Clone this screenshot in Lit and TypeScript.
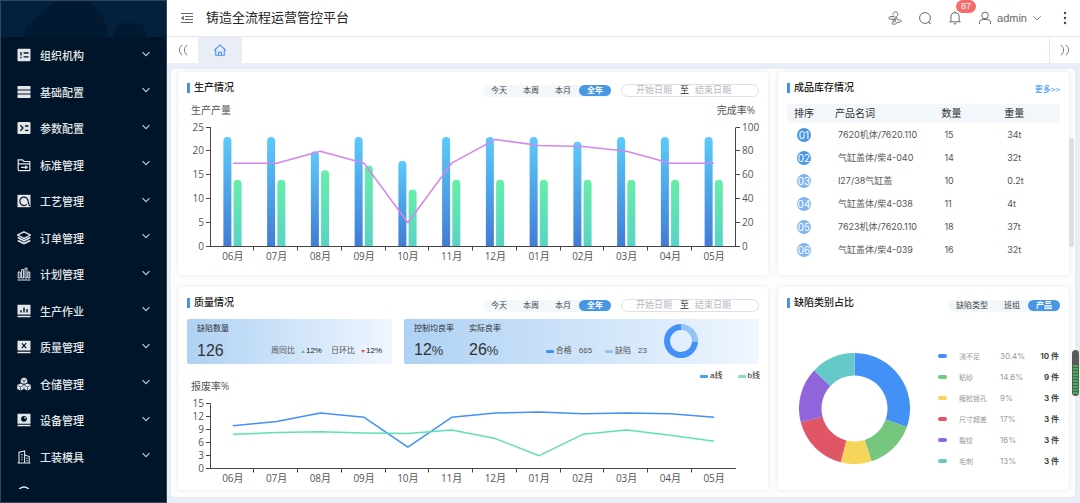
import { LitElement, html, svg, css, nothing } from "lit";
import { customElement, state, property } from "lit/decorators.js";
import { classMap } from "lit/directives/class-map.js";

const MONTHS = ["06", "07", "08", "09", "10", "11", "12", "01", "02", "03", "04", "05"];
const OUTPUT = [23, 23, 20, 23, 18, 23, 23, 23, 22, 23, 23, 23];
const FINISHED = [14, 14, 16, 17, 12, 14, 14, 14, 14, 14, 14, 14];
const RATE = [70, 70, 80, 70, 20, 70, 90, 85, 84, 80, 70, 70];
const LINE_A = [10, 11, 13, 12, 5, 12, 13, 13.2, 12.8, 13, 12.8, 12];
const LINE_B = [8, 8.4, 8.6, 8.3, 8.2, 9, 7, 3, 8, 9, 7.8, 6.4];

const STOCK = [
  ["7620机体/7620.110", "15", "34t"],
  ["气缸盖体/柴4-040", "14", "32t"],
  ["I27/38气缸盖", "10", "0.2t"],
  ["气缸盖体/柴4-038", "11", "4t"],
  ["7623机体/7620.110", "18", "37t"],
  ["气缸盖体/柴4-039", "16", "32t"],
];

const DEFECTS = [
  { name: "浇不足", pct: "30.4%", share: 30.4, count: 10, color: "#4390f7" },
  { name: "粘砂", pct: "14.6%", share: 14.6, count: 9, color: "#74c77d" },
  { name: "缩松锁孔", pct: "9%", share: 9, count: 3, color: "#f7d45a" },
  { name: "尺寸超差", pct: "17%", share: 17, count: 3, color: "#e05667" },
  { name: "裂纹", pct: "16%", share: 16, count: 3, color: "#9166dc" },
  { name: "毛刺", pct: "13%", share: 13, count: 3, color: "#66c9c9" },
];

/* Menu glyphs on a 14 x 14 grid. "k" is the sidebar background, used to cut shapes out. */
const k = "#001529";
const MENU = [
  { label: "组织机构", icon: svg`<rect x=".5" y=".8" width="13" height="12.4" rx="1" fill="currentColor"/><path d="M4 4v3.600M4 8.800v1.400M6.600 5h5M6.600 8.800h5" stroke=${k} stroke-width="1.300"/>` },
  { label: "基础配置", icon: svg`<path d="M.5 1h13v3.400H.5zM.5 5.400h13v3.200H.5zM.5 9.600h13V13H.5z" fill="currentColor"/>` },
  { label: "参数配置", icon: svg`<rect x=".5" y="1" width="13" height="12" rx="1" fill="currentColor"/><path d="M3.400 4.200 6 7l-2.600 2.800M8 5h3.400M8 9.400h3.400" fill="none" stroke=${k} stroke-width="1.300"/>` },
  { label: "标准管理", icon: svg`<path d="M1.200 12V1.800h4.200l1.400 1.700h6v9.200H1.900zM1.200 5.800h11.600M4 9.300h6M8.200 7.800l2 1.500-2 1.500" fill="none" stroke="currentColor" stroke-width="1.200"/>` },
  { label: "工艺管理", icon: svg`<rect x=".5" y=".8" width="13" height="12.4" fill="currentColor"/><path d="M9.800 10.400A4.200 4.200 0 1 1 11.200 7.200c0 1.900.2 3.200 1.800 5" fill="none" stroke=${k} stroke-width="1.200"/>` },
  { label: "订单管理", icon: svg`<path d="M7 .8 13.400 4 7 7.400.6 4z" fill="none" stroke="currentColor" stroke-width="1.300"/><path d="M.8 6.600 7 9.800l6.200-3.200M.8 9.400 7 12.600l6.200-3.200" fill="none" stroke="currentColor" stroke-width="1.700"/>` },
  { label: "计划管理", icon: svg`<path d="M1.200 5h2v6h-2zM4.600 2.600h2V11h-2zM8 1.200h2V11H8zM11 5h1.800v6H11zM.4 13h13.200" fill="none" stroke="currentColor" stroke-width="1"/>` },
  { label: "生产作业", icon: svg`<path d="M.5.8h13v9.800H.5zM.5 11.800h13v1.400H.5z" fill="currentColor"/><path d="M4 8.600V6.200M7 8.600V3.400M10 8.600V5" stroke=${k} stroke-width="1.400"/>` },
  { label: "质量管理", icon: svg`<path d="M.5.8h13v9.800H.5zM.5 11.800h13v1.400H.5z" fill="currentColor"/><path d="m5 3.400 4 4.600M9.200 3.200 4.800 8.200" stroke=${k} stroke-width="1.200"/>` },
  { label: "仓储管理", icon: svg`<path d="m7 .4 3.200 1.600v3.500L7 7.200 3.800 5.500V2zM3.500 6.400l3.300 1.700v3.800l-3.300 1.700L.2 11.900V8.100zM10.500 6.400l3.300 1.700v3.800l-3.300 1.700-3.300-1.700V8.100z" fill="currentColor"/><path d="M7 3.800v3M3.500 10v3.200M10.500 10v3.200M4.400 2.600 7 3.900l2.600-1.300M.8 8.600l2.700 1.300 2.700-1.300M7.800 8.600l2.700 1.300 2.700-1.300" fill="none" stroke=${k} stroke-width=".6"/>` },
  { label: "设备管理", icon: svg`<path d="M.5.8h13v10H.5zM.5 11.800h13v1.400H.5z" fill="currentColor"/><circle cx="7" cy="5.800" r="2.900" fill=${k}/><circle cx="8" cy="4.800" r=".9" fill="currentColor"/>` },
  { label: "工装模具", icon: svg`<path d="M2 12.800V2.200L7.600.9v11.900M7.600 5l4.600 1.600v6.200M.5 13h13M4.200 4.600h1.400M4.200 7.200h1.400M4.200 9.800h1.400M9.400 8.400h1.200M9.400 10.600h1.200" fill="none" stroke="currentColor" stroke-width="1.100"/>` },
  { label: "", icon: svg`<circle cx="7" cy="7" r="6" fill="none" stroke="currentColor" stroke-width="1.400"/>` },
];

/* Shared horizontal scale of the two month charts. */
const X0 = 33;
const STEP = 43.75;
const X1 = X0 + STEP * 12;
const mid = (i: number) => X0 + STEP * (i + 0.5);
const points = (values: number[], base: number, unit: number) =>
  values.map((v, i) => `${mid(i)},${(base - v * unit).toFixed(1)}`).join(" ");

function ringSlice(cx: number, cy: number, R: number, r: number, from: number, to: number) {
  const at = (radius: number, t: number) => {
    const a = t * Math.PI * 2;
    return `${(cx + radius * Math.sin(a)).toFixed(2)} ${(cy - radius * Math.cos(a)).toFixed(2)}`;
  };
  const big = to - from > 0.5 ? 1 : 0;
  return `M${at(R, from)}A${R} ${R} 0 ${big} 1 ${at(R, to)}L${at(r, to)}A${r} ${r} 0 ${big} 0 ${at(r, from)}Z`;
}

const monthAxis = (base: number, labelY: number) => svg`
  <path class="axis" d="M${X0 - 5} ${base}H${X1}"/>
  ${MONTHS.map((m, i) => svg`
    ${i ? svg`<path class="axis" d="M${Math.floor(X0 + STEP * i) - 0.5} ${base}v4"/>` : nothing}
    <text class="tick" x=${mid(i)} y=${labelY} text-anchor="middle">${m}月</text>`)}
`;

const fontStack = css`
  :host { font-family: "Liberation Sans", "Noto Sans CJK SC", sans-serif; color: #333; }
  button, input { font: inherit; color: inherit; border: 0; padding: 0; margin: 0; background: none; }
  button { cursor: pointer; }
`;

@customElement("pill-group")
class PillGroup extends LitElement {
  @property({ attribute: false }) options: string[] = [];
  @property() selected = "";

  static styles = [fontStack, css`
    :host { display: flex; height: 12px; border-radius: 6px; background: #f2f7fc; }
    .pill { padding: 0 8px; font-size: 8px; line-height: 11px; height: 11px; border-radius: 6px; color: #444; white-space: nowrap; }
    .on { background: #4797e4; color: #fff; font-weight: 700; }
  `];

  render() {
    return this.options.map((o) => html`
      <button class=${classMap({ pill: true, on: o === this.selected })}
        aria-pressed=${o === this.selected} @click=${() => (this.selected = o)}>${o}</button>`);
  }
}

@customElement("side-menu")
class SideMenu extends LitElement {
  static styles = [fontStack, css`
    :host { display: flex; flex-direction: column; box-sizing: border-box; background: #001529; border: 1px solid #33465a; padding-bottom: 13px; min-height: 0; }
    .banner { height: 36px; flex: none; background: #03203d; display: block; width: 100%; }
    .menu { list-style: none; margin: 0; padding: 0; flex: 1; min-height: 0; overflow: hidden; display: grid; grid-template-rows: repeat(7, 36px 37px); }
    .item { width: 100%; height: 100%; display: flex; align-items: center; gap: 9px; padding: 0 15px 0 16px; color: #e4e7ea; font-size: 11px; }
    .glyph { width: 14px; height: 14px; flex: none; }
    .name { flex: 1; text-align: left; font-weight: 500; }
    .arrow { width: 10px; height: 10px; margin-bottom: 3px; flex: none; }
  `];

  render() {
    return html`
      <svg class="banner" viewBox="0 0 165 36" preserveAspectRatio="none" aria-hidden="true">
        <path d="M23 36C24 26 30 20 38 14 46 8 50 3 56 0h32c6 4 10 12 16 20 2 6 2 12 3 16z" fill="#021a31"/>
        <path d="M112 36c1-8 4-13 9-14h16c6 2 8 8 9 14z" fill="#021a31"/>
      </svg>
      <ul class="menu">
        ${MENU.map((m) => html`<li>
          <button class="item">
            <svg class="glyph" viewBox="0 0 14 14" aria-hidden="true">${m.icon}</svg>
            <span class="name">${m.label}</span>
            <svg class="arrow" viewBox="0 0 10 10" aria-hidden="true"><path d="m1.500 3.200 3.500 3.500 3.500-3.500" fill="none" stroke="#c3c9cf" stroke-width="1.200"/></svg>
          </button></li>`)}
      </ul>`;
  }
}

@customElement("app-root")
class AppRoot extends LitElement {
  @state() private start = "";
  @state() private end = "";

  static styles = [fontStack, css`
    :host { display: grid; grid-template-columns: 167px minmax(0, 1fr); height: 100vh; background: #fff; overflow: hidden; }
    svg { display: block; }
    .main { display: flex; flex-direction: column; min-width: 0; min-height: 0; }

    .header { height: 36px; flex: none; display: flex; align-items: center; border-bottom: 1px solid #e6e8ee; padding: 0 8px 0 13px; color: #666; }
    .fold { width: 14px; height: 14px; margin-right: 12px; }
    .title { margin: 0; flex: 1; font-size: 13px; font-weight: 400; color: #222; line-height: 20px; }
    .icons { display: flex; align-items: center; gap: 16px; }
    .ico { width: 14px; height: 14px; display: block; }
    .bell { position: relative; }
    .badge { position: absolute; left: 8px; top: -11px; width: 20px; height: 13px; border-radius: 7px; background: #f56c6c; color: #fff; font-size: 9px; line-height: 13px; text-align: center; }
    .user { display: flex; align-items: center; gap: 5px; font-size: 11px; color: #666; }
    .caret { width: 10px; height: 10px; }

    .tabs { height: 26px; flex: none; display: flex; }
    .edge { width: 31px; display: grid; place-items: center; color: #777; }
    .edge-right { border-left: 1px solid #e6e8ee; }
    .home { width: 44px; display: grid; place-items: center; background: #e9edf6; color: #4a90f5; }
    .spacer { flex: 1; }

    .content { flex: 1; min-height: 0; background: #e9edf5; padding: 6px 5px 6px 4px; display: flex; }
    .board { flex: 1; min-width: 0; background: #fdfdfe; border-radius: 4px; padding: 3px 6px 7px 7px; display: grid; grid-template-columns: minmax(0, 590fr) minmax(0, 291fr); grid-template-rows: minmax(0, 1fr) minmax(0, 1fr); gap: 12px 10px; }
    .card { background: #fff; border-radius: 4px; box-shadow: 0 0 5px rgba(30, 50, 90, .1); display: flex; flex-direction: column; min-width: 0; min-height: 0; }
    .head { height: 32px; flex: none; display: flex; align-items: center; padding: 0 9px; }
    .name { margin: 0; flex: 1; font-size: 10px; line-height: 12px; font-weight: 500; color: #222; display: flex; align-items: center; gap: 4px; }
    .name::before { content: ""; width: 3px; height: 10px; background: #4391f7; }
    .tools { display: flex; align-items: center; gap: 10px; margin-top: 5px; }
    .range { box-sizing: border-box; width: 138px; height: 13px; border: 1px solid #dcdfe6; border-radius: 7px; display: flex; align-items: center; gap: 6px; padding-left: 14px; font-size: 9px; line-height: 11px; }
    .date { width: 38px; height: 11px; outline: 0; }
    .date::placeholder { color: #b4b8c0; opacity: 1; }
    .chart { width: 100%; height: auto; overflow: visible; }
    .axis { stroke: #444; stroke-width: 1; fill: none; }
    .tick { font: 10px "Open Sans", "Noto Sans CJK SC", sans-serif; fill: #555; }
    .line { fill: none; stroke-width: 1.500; stroke-linejoin: round; }

    .stats { display: grid; grid-template-columns: 205fr 355fr; gap: 12px; padding: 0 9px; }
    .stat { height: 45px; box-sizing: border-box; border-radius: 2px; display: flex; padding: 5px 10px 4px; background: linear-gradient(90deg, #aed1f3, #eff6ff); }
    .metric { margin-right: 15px; display: flex; flex-direction: column; justify-content: space-between; font-size: 8px; line-height: 10px; white-space: nowrap; }
    .big { font-size: 16px; line-height: 18px; color: #333; }
    .unit { font-size: 13px; }
    .notes { flex: 1; display: flex; justify-content: flex-end; align-items: flex-end; gap: 9px; font-size: 8px; line-height: 10px; padding-bottom: 4px; color: #555; white-space: nowrap; }
    .note { display: flex; align-items: center; gap: 6px; }
    .delta { display: flex; align-items: center; gap: 1px; color: #222; }
    .up, .down { border: 2px solid transparent; }
    .up { border-bottom: 3px solid #6ccb6c; border-top: 0; }
    .down { border-top: 3px solid #ee4b4b; border-bottom: 0; }
    .parts { gap: 13px; }
    .part { display: flex; align-items: center; gap: 2px; }
    .part b { font-weight: 400; margin-left: 5px; }
    .dash { width: 8px; height: 3px; border-radius: 1px; }
    .solid { background: #4390f7; }
    .pale { background: #93c4f5; }
    .sky { background: #4aa3e8; }
    .mint { background: #7fe3b8; }
    .ring { width: 34px; height: 34px; margin: 0 51px 0 17px; }
    .keys { display: flex; justify-content: flex-end; gap: 15px; padding: 8px 8px 0; font-size: 8px; line-height: 8px; color: #222; }

    .link { font-size: 8px; color: #2f8ff5; text-decoration: none; }
    .stock { border-collapse: collapse; table-layout: fixed; margin: 0 9px; font-size: 9px; color: #555; }
    .stock th { height: 19px; padding: 0 0 0 7px; font-size: 10px; font-weight: 400; text-align: left; background: #f2f7fc; color: #333; line-height: 12px; }
    .stock td { height: 23px; padding: 0 0 0 10px; line-height: 14px; white-space: nowrap; font-family: Inter, "Noto Sans CJK SC", sans-serif; }
    .c1 { width: 15%; } .c2 { width: 39%; } .c3 { width: 23%; }
    .rank { display: block; width: 14px; height: 14px; border-radius: 50%; background: #7fb7ee; color: #fff; text-align: center; line-height: 14px; font-size: 10px; }
    .top { background: #4797e4; }

    .share { flex: 1; display: flex; align-items: center; gap: 28px; padding: 7px 10px 0 21px; }
    .donut { flex: 0 1 111px; min-width: 0; }
    .legend { flex: 1; list-style: none; margin: 0; padding: 0; font-size: 8px; font-family: Inter, "Noto Sans CJK SC", sans-serif; }
    .row { height: 21px; display: grid; grid-template-columns: 9px 29px minmax(0, 1fr) auto; column-gap: 12px; align-items: center; color: #999; white-space: nowrap; }
    .chip { height: 4px; border-radius: 2px; }
    .label { font-size: 7px; }
    .count { font-weight: 700; color: #444; }

    .thumb { position: absolute; right: 6px; top: 138px; width: 5px; height: 109px; border-radius: 3px; background: #dcdee2; }
    .meter { position: absolute; right: 1px; top: 350px; width: 7px; height: 46px; border-radius: 4px; overflow: hidden; background: #5a5a5a; box-sizing: border-box; padding: 15px 1px 2px; }
    .level { height: 100%; background: repeating-linear-gradient(180deg, #3fae55 0 2px, #4a6650 2px 3px); }
  `];

  private range(id: string) {
    return html`
      <div class="tools">
        <pill-group .options=${["今天", "本周", "本月", "全年"]} selected="全年"></pill-group>
        <div class="range">
          <input class="date" id="${id}-from" aria-label="开始日期" placeholder="开始日期" .value=${this.start}>
          <span>至</span>
          <input class="date" id="${id}-to" aria-label="结束日期" placeholder="结束日期" .value=${this.end}>
        </div>
      </div>`;
  }

  private outputChart() {
    const base = 142.5;
    const unit = 4.76;
    const bar = (x: number, v: number, fill: string) => {
      const y = base - v * unit;
      return svg`<path d="M${x} ${base}V${y + 4}a4 4 0 0 1 8 0V${base}z" fill=${fill}/>`;
    };
    return html`
      <svg class="chart" viewBox="0 0 590 168" role="img" aria-label="生产产量">
        <defs>
          <linearGradient id="blue" x1="0" y1="0" x2="0" y2="1"><stop offset="0" stop-color="#5bcbfa"/><stop offset="1" stop-color="#417bd6"/></linearGradient>
          <linearGradient id="green" x1="0" y1="0" x2="0" y2="1"><stop offset="0" stop-color="#68eda9"/><stop offset="1" stop-color="#58d3c6"/></linearGradient>
        </defs>
        <text class="tick" x="13" y="10">生产产量</text>
        <text class="tick" x="577" y="10" text-anchor="end">完成率%</text>
        ${OUTPUT.map((v, i) => svg`${bar(mid(i) - 9.5, v, "url(#blue)")}${bar(mid(i) + 0.7, FINISHED[i], "url(#green)")}`)}
        <path class="axis" d="M${X0 - 0.5} ${base}V23.500M${X1 - 0.5} ${base}V23.500"/>
        ${[0, 5, 10, 15, 20, 25].map((v) => {
          const y = Math.round(base - v * unit) - 0.5;
          return svg`
            <path class="axis" d="M${X0 - 5} ${v ? y : base}h5M${X1} ${v ? y : base}h4"/>
            <text class="tick" x=${X0 - 7} y=${y + 3} text-anchor="end">${v}</text>
            <text class="tick" x=${X1 + 6} y=${y + 3}>${v * 4}</text>`;
        })}
        ${monthAxis(base, 156)}
        <polyline class="line" stroke="#d486ec" points=${points(RATE, base, unit / 4)}/>
      </svg>`;
  }

  private scrapChart() {
    const base = 88.5;
    const unit = 4.27;
    return html`
      <svg class="chart" viewBox="0 0 590 108" role="img" aria-label="报废率">
        <text class="tick" x="13" y="10">报废率%</text>
        <path class="axis" d="M${X0 - 0.5} ${base}V24.500"/>
        ${[0, 3, 6, 9, 12, 15].map((v) => {
          const y = Math.round(base - v * unit) - 0.5;
          return svg`
            <path class="axis" d="M${X0 - 5} ${v ? y : base}h5"/>
            <text class="tick" x=${X0 - 7} y=${y + 3} text-anchor="end">${v}</text>`;
        })}
        ${monthAxis(base, 102)}
        <polyline class="line" stroke="#4390f7" points=${points(LINE_A, base, unit)}/>
        <polyline class="line" stroke="#5fe0b4" points=${points(LINE_B, base, unit)}/>
      </svg>`;
  }

  private donut() {
    let from = 0;
    return html`
      <svg class="donut" viewBox="0 0 111 111" role="img" aria-label="缺陷类别占比">
        ${DEFECTS.map((d) => {
          const to = from + d.share / 100;
          const slice = svg`<path d=${ringSlice(55.5, 55.5, 55.5, 33, from, to)} fill=${d.color}/>`;
          from = to;
          return slice;
        })}
      </svg>`;
  }

  render() {
    return html`
      <side-menu></side-menu>
      <div class="main">
        <header class="header">
          <button class="fold" aria-label="收起菜单"><svg class="ico" viewBox="0 0 14 14"><path d="M1 2.500h12M5 5.500h8M5 8.500h8M1 11.500h12" stroke="currentColor" stroke-width="1.200"/><path d="M3.800 4.600v4.800L.9 7z" fill="currentColor"/></svg></button>
          <h1 class="title">铸造全流程运营管控平台</h1>
          <div class="icons">
            <button aria-label="主题"><svg class="ico" viewBox="0 0 14 14"><path d="M5 3.600C5 1.800 6.100.9 7.500.9s2.400 1 2.400 2.300c0 1-.5 1.700-1.200 2.200v2.400c.3 1.300 1.600 1 2.600 1 1 0 1.900.5 1.900 1.300s-.8 1.200-1.700 1.200H9.200c-.4 1.300-1.600 1.900-2.900 1.900-1.500 0-2.400-.6-2.400-1.300 0-.8.900-1 1.800-1V8.200H2.900C1.600 8.200.8 7.700.8 6.900s.8-1.300 1.900-1.300h3.100V5.100H4.400M5.700 8.200h1.500M7.200 5.600v5.600" fill="none" stroke="currentColor" stroke-width="1"/></svg></button>
            <button aria-label="搜索"><svg class="ico" viewBox="0 0 14 14"><circle cx="7" cy="7" r="5.400" fill="none" stroke="currentColor" stroke-width="1"/><path d="m10.600 10.900 1.900 1.900" stroke="currentColor" stroke-width="1.100"/></svg></button>
            <button class="bell" aria-label="消息"><svg class="ico" viewBox="0 0 14 14"><path d="M7 .4v1.200M1.400 10.800h11.200M2.900 10.600V5.900a4.100 4.100 0 0 1 8.200 0v4.700M5.600 12.800h2.800" fill="none" stroke="currentColor" stroke-width="1"/></svg><span class="badge">87</span></button>
            <button class="user"><svg class="ico" viewBox="0 0 14 14"><circle cx="7" cy="4.500" r="3.300" fill="none" stroke="currentColor" stroke-width="1"/><path d="M1.500 13v-1.600c0-1.700 1.200-2.700 3.700-2.900h3.600c2.500.2 3.700 1.200 3.700 2.900V13" fill="none" stroke="currentColor" stroke-width="1"/></svg>admin<svg class="caret" viewBox="0 0 10 10"><path d="M1.200 3.200 5 7l3.800-3.800" fill="none" stroke="currentColor" stroke-width=".8"/></svg></button>
            <button aria-label="更多"><svg class="ico" viewBox="0 0 14 14"><g fill="#444"><circle cx="7" cy="2" r="1.200"/><circle cx="7" cy="7" r="1.200"/><circle cx="7" cy="12" r="1.200"/></g></svg></button>
          </div>
        </header>
        <nav class="tabs">
          <button class="edge" aria-label="向左"><svg class="ico" viewBox="0 0 14 14"><path d="M6 1.800C2.500 6 2.500 8 6 12.200M11 1.800C7.500 6 7.500 8 11 12.200" fill="none" stroke="currentColor"/></svg></button>
          <button class="home" aria-label="首页"><svg class="ico" viewBox="0 0 14 14"><path d="M1.200 7.300 7 1.900l5.800 5.400M2.700 6.400v5.900h8.600V6.400M5.500 12V9.200h3V12" fill="none" stroke="currentColor" stroke-width="1.100"/></svg></button>
          <span class="spacer"></span>
          <button class="edge edge-right" aria-label="向右"><svg class="ico" viewBox="0 0 14 14"><path d="M3 1.800C6.500 6 6.500 8 3 12.200M8 1.800c3.500 4.200 3.500 6.200 0 10.400" fill="none" stroke="currentColor"/></svg></button>
        </nav>
        <main class="content">
          <div class="board">
            <section class="card">
              <div class="head"><h2 class="name">生产情况</h2>${this.range("output")}</div>
              ${this.outputChart()}
            </section>

            <section class="card">
              <div class="head"><h2 class="name">成品库存情况</h2><a class="link" href="#stock">更多&gt;&gt;</a></div>
              <table class="stock">
                <thead><tr><th class="c1">排序</th><th class="c2">产品名词</th><th class="c3">数量</th><th>重量</th></tr></thead>
                <tbody>
                  ${STOCK.map((r, i) => html`<tr>
                    <td><span class=${classMap({ rank: true, top: i < 2 })}>0${i + 1}</span></td>
                    ${r.map((c) => html`<td>${c}</td>`)}
                  </tr>`)}
                </tbody>
              </table>
            </section>

            <section class="card">
              <div class="head"><h2 class="name">质量情况</h2>${this.range("quality")}</div>
              <div class="stats">
                <div class="stat">
                  <div class="metric"><span>缺陷数量</span><span class="big">126</span></div>
                  <div class="notes">
                    <span class="note">周同比<span class="delta"><i class="up"></i>12%</span></span>
                    <span class="note">日环比<span class="delta"><i class="down"></i>12%</span></span>
                  </div>
                </div>
                <div class="stat">
                  <div class="metric"><span>控制均良率</span><span class="big">12<span class="unit">%</span></span></div>
                  <div class="metric"><span>实际良率</span><span class="big">26<span class="unit">%</span></span></div>
                  <div class="notes parts">
                    <span class="part"><i class="dash solid"></i>合格<b>665</b></span>
                    <span class="part"><i class="dash pale"></i>缺陷<b>23</b></span>
                  </div>
                  <svg class="ring" viewBox="0 0 34 34" role="img" aria-label="合格与缺陷">
                    <path d=${ringSlice(17, 17, 17, 11, 0, 0.26)} fill="#93c4f5"/>
                    <path d=${ringSlice(17, 17, 17, 11, 0.26, 1)} fill="#4390f7"/>
                  </svg>
                </div>
              </div>
              <div class="keys">
                <span class="part"><i class="dash sky"></i>a线</span>
                <span class="part"><i class="dash mint"></i>b线</span>
              </div>
              ${this.scrapChart()}
            </section>

            <section class="card">
              <div class="head"><h2 class="name">缺陷类别占比</h2>
                <div class="tools"><pill-group .options=${["缺陷类型", "班组", "产品"]} selected="产品"></pill-group></div>
              </div>
              <div class="share">
                ${this.donut()}
                <ul class="legend">
                  ${DEFECTS.map((d) => html`<li class="row">
                    <span class="chip" style="background:${d.color}"></span>
                    <span class="label">${d.name}</span><span>${d.pct}</span><span class="count">${d.count} 件</span>
                  </li>`)}
                </ul>
              </div>
            </section>
          </div>
        </main>
      </div>
      <div class="thumb"></div>
      <div class="meter"><div class="level"></div></div>
    `;
  }
}
